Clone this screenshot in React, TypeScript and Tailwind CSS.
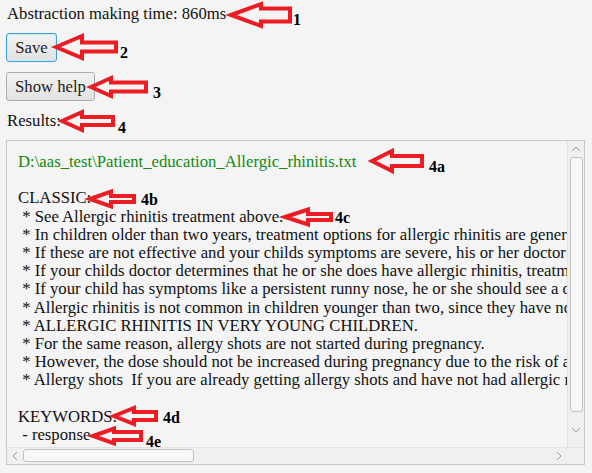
import React from "react";

type ArrowSpec = { tx: number; ty: number; hx: number; ex: number; h: number; s: number };

const arrows: ArrowSpec[] = [
  { tx: 231, ty: 15, hx: 261, ex: 290, h: 11, s: 6.5 },
  { tx: 56, ty: 47, hx: 82, ex: 116, h: 11, s: 4.5 },
  { tx: 91, ty: 87, hx: 111, ex: 146, h: 9, s: 4.5 },
  { tx: 62, ty: 121, hx: 82, ex: 113, h: 9, s: 4 },
  { tx: 372, ty: 161, hx: 392, ex: 422, h: 10, s: 5 },
  { tx: 90, ty: 199, hx: 111, ex: 134, h: 7.5, s: 3 },
  { tx: 285, ty: 217, hx: 308, ex: 331, h: 7.5, s: 3 },
  { tx: 114, ty: 416, hx: 134, ex: 156, h: 8, s: 4 },
  { tx: 93, ty: 436, hx: 114, ex: 141, h: 7.5, s: 4 },
];

const labels = [
  { x: 293, y: 25, t: "1" },
  { x: 120, y: 58, t: "2" },
  { x: 153, y: 98, t: "3" },
  { x: 118, y: 133, t: "4" },
  { x: 429, y: 172, t: "4a" },
  { x: 141, y: 205, t: "4b" },
  { x: 335, y: 223, t: "4c" },
  { x: 163, y: 423, t: "4d" },
  { x: 146, y: 447, t: "4e" },
];

// lines as far as the text box shows them (the rest is scrolled out of view)
const lines = [
  "* See Allergic rhinitis treatment above.",
  "* In children older than two years, treatment options for allergic rhinitis are gener",
  "* If these are not effective and your childs symptoms are severe, his or her doctor",
  "* If your childs doctor determines that he or she does have allergic rhinitis, treatm",
  "* If your child has symptoms like a persistent runny nose, he or she should see a d",
  "* Allergic rhinitis is not common in children younger than two, since they have not",
  "* ALLERGIC RHINITIS IN VERY YOUNG CHILDREN.",
  "* For the same reason, allergy shots are not started during pregnancy.",
  "* However, the dose should not be increased during pregnancy due to the risk of a",
  "* Allergy shots  If you are already getting allergy shots and have not had allergic re",
];

function Chevron({ dir }: { dir: "up" | "down" | "left" | "right" }) {
  const pts = {
    up: "1,6 5,2 9,6",
    down: "1,2 5,6 9,2",
    left: "6,1 2,5 6,9",
    right: "2,1 6,5 2,9",
  }[dir];
  const vertical = dir === "up" || dir === "down";
  return (
    <svg width={vertical ? 10 : 8} height={vertical ? 8 : 10} viewBox={vertical ? "0 0 10 8" : "0 0 8 10"}>
      <polyline points={pts} fill="none" stroke="#9a9a9a" strokeWidth="1" />
    </svg>
  );
}

export default function App() {
  return (
    <div
      className="relative w-[592px] h-[473px] overflow-hidden bg-[#f4f4f4] px-[6px] text-[16.7px] text-[#111]"
      style={{ fontFamily: '"Liberation Serif", "Times New Roman", serif' }}
    >
      <div className="leading-[28px] pl-[1px]">Abstraction making time: 860ms</div>

      <button className="mt-[5px] block h-[29px] w-[51px] rounded-[3px] border border-[#3c9fd8] bg-gradient-to-b from-[#f2f2f2] to-[#e2e2e2] text-[16.7px] text-[#222] shadow-[inset_0_0_0_1px_#cfe9f7]">
        Save
      </button>
      <button className="mt-[10px] block h-[29px] w-[89px] rounded-[3px] border border-[#adadad] bg-gradient-to-b from-[#f2f2f2] to-[#e2e2e2] text-[16.7px] text-[#222]">
        Show help
      </button>

      <div className="mt-[6px] leading-[28px] pl-[1px]">Results:</div>

      <div className="mt-[5px] flex h-[325px] w-[579px] flex-col border border-[#c8c8c8]">
        <div className="flex min-h-0 flex-1">
          <div className="min-w-0 flex-1 overflow-hidden whitespace-pre pl-[11px] pt-[12px] leading-[18.2px]">
            <div className="text-[#118a11]">D:\aas_test\Patient_education_Allergic_rhinitis.txt</div>
            <div>&nbsp;</div>
            <div>CLASSIC:</div>
            {lines.map((l, i) => (
              <div key={i}> {l}</div>
            ))}
            <div>&nbsp;</div>
            <div>KEYWORDS:</div>
            <div> - response</div>
          </div>
          <div className="flex w-[17px] flex-col items-center border-l border-[#e2e2e2] bg-[#f0f0f0]">
            <div className="flex h-[16px] items-center justify-center">
              <Chevron dir="up" />
            </div>
            <div className="h-[255px] w-[13px] rounded-[3px] border border-[#c2c2c2] bg-[#f7f7f7]" />
            <div className="flex flex-1 items-center justify-center">
              <Chevron dir="down" />
            </div>
          </div>
        </div>
        <div className="flex h-[17px] border-t border-[#e2e2e2] bg-[#f0f0f0]">
          <div className="flex w-[16px] items-center justify-center">
            <Chevron dir="left" />
          </div>
          <div className="mt-[1px] h-[13px] w-[171px] rounded-[3px] border border-[#c2c2c2] bg-[#f7f7f7]" />
          <div className="flex-1" />
          <div className="flex w-[16px] items-center justify-center">
            <Chevron dir="right" />
          </div>
          <div className="w-[17px] bg-[#f0f0f0]" />
        </div>
      </div>

      <svg className="pointer-events-none absolute left-0 top-0" width="592" height="473">
        {arrows.map((a, i) => (
          <polygon
            key={i}
            points={`${a.tx},${a.ty} ${a.hx},${a.ty - a.h} ${a.hx},${a.ty - a.s} ${a.ex},${a.ty - a.s} ${a.ex},${a.ty + a.s} ${a.hx},${a.ty + a.s} ${a.hx},${a.ty + a.h}`}
            fill="none"
            stroke="#ec1c24"
            strokeWidth="4"
            strokeLinejoin="miter"
          />
        ))}
        {labels.map((l, i) => (
          <text
            key={i}
            x={l.x}
            y={l.y}
            fontFamily="Liberation Serif, serif"
            fontWeight="bold"
            fontSize="16"
            fill="#000"
          >
            {l.t}
          </text>
        ))}
      </svg>
    </div>
  );
}
